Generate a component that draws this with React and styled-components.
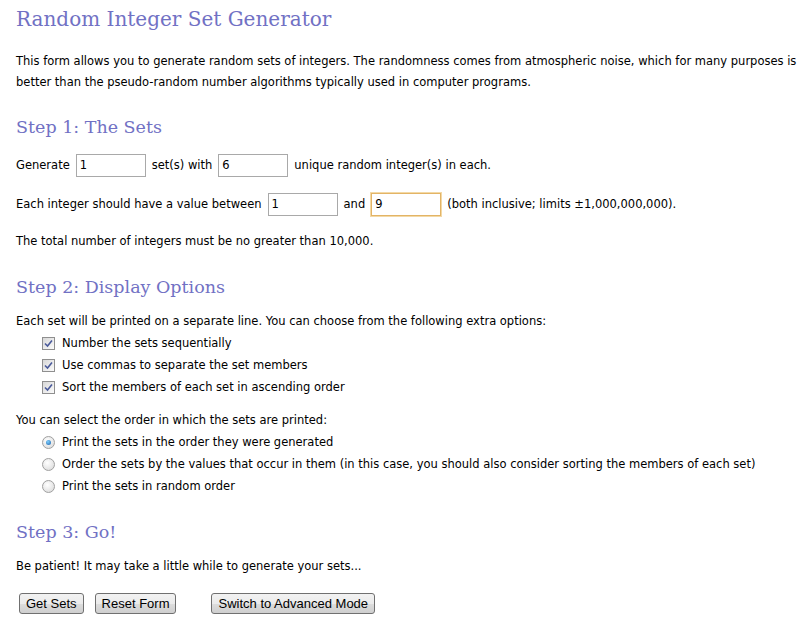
import styled, { createGlobalStyle } from "styled-components";

const Global = createGlobalStyle`
  body {
    margin: 0;
    background: #fff;
    color: #000;
    font-family: "DejaVu Sans", Verdana, sans-serif;
    font-size: 11.5px;
  }
`;

const Page = styled.div`
  width: 805px;
  padding: 0 8px 0 16px;
  box-sizing: border-box;
`;

const Title = styled.h1`
  margin: 0;
  padding-top: 6px;
  height: 26px;
  font-family: "DejaVu Serif", Georgia, serif;
  font-weight: normal;
  font-size: 20px;
  line-height: 26px;
  color: #7171c4;
`;

const StepTitle = styled.h2`
  margin: ${(p) => p.$top || 0}px 0 0;
  font-family: "DejaVu Serif", Georgia, serif;
  font-weight: normal;
  font-size: 17.5px;
  line-height: 24px;
  color: #7171c4;
`;

const Para = styled.p`
  margin: ${(p) => p.$top || 0}px 0 0;
  line-height: 21px;
`;

const Row = styled.div`
  display: flex;
  align-items: center;
  gap: 6px;
  margin-top: ${(p) => p.$top || 0}px;
  height: 24px;
  white-space: nowrap;
`;

const NumInput = styled.input`
  width: 70px;
  height: 23px;
  box-sizing: border-box;
  margin: 0;
  padding: 1px 3px;
  border: 1px solid ${(p) => (p.$focus ? "#e3b466" : "#a9a9a9")};
  box-shadow: ${(p) => (p.$focus ? "0 0 0 1px #f3d9a6" : "none")};
  font-family: "DejaVu Sans", Verdana, sans-serif;
  font-size: 11.5px;
  color: #000;
  outline: none;
`;

const OptionList = styled.div`
  display: flex;
  flex-direction: column;
  padding-left: 26px;
`;

const Option = styled.label`
  display: flex;
  align-items: center;
  gap: 7px;
  height: 22px;
`;

const Box = styled.span`
  width: 13px;
  height: 13px;
  box-sizing: border-box;
  border: 1px solid #8f8f8f;
  background: linear-gradient(135deg, #d8d8d8, #fbfbfb);
  display: flex;
  align-items: center;
  justify-content: center;
`;

const Radio = styled.span`
  width: 13px;
  height: 13px;
  box-sizing: border-box;
  border-radius: 50%;
  border: 1px solid #a0a0a0;
  background: radial-gradient(circle at 40% 35%, #ffffff, #d6d6d6);
  display: flex;
  align-items: center;
  justify-content: center;
`;

const Dot = styled.span`
  width: 5px;
  height: 5px;
  border-radius: 50%;
  background: radial-gradient(circle at 40% 35%, #7fd0ff, #1a5fa8);
`;

const ButtonRow = styled.div`
  display: flex;
  gap: 11px;
  margin-top: 16px;
  padding-left: 3px;
`;

const Button = styled.button`
  height: 21px;
  padding: 0 6px;
  font-family: "Liberation Sans", Arial, sans-serif;
  font-size: 13px;
  color: #000;
  border: 1px solid #707070;
  border-radius: 3px;
  background: linear-gradient(#f2f2f2 0%, #ebebeb 50%, #dddddd 51%, #cfcfcf 100%);
  margin-left: ${(p) => p.$gap || 0}px;
`;

const Check = () => (
  <Box>
    <svg width="9" height="9" viewBox="0 0 9 9">
      <path d="M1 4.5 L3.5 7 L8 1.5" fill="none" stroke="#4a5a9a" strokeWidth="1.6" />
    </svg>
  </Box>
);

const App = () => (
  <Page>
    <Global />
    <Title>Random Integer Set Generator</Title>
    <Para $top={19}>
      This form allows you to generate random sets of integers. The randomness comes from
      atmospheric noise, which for many purposes is better than the pseudo-random number
      algorithms typically used in computer programs.
    </Para>

    <StepTitle $top={22}>Step 1: The Sets</StepTitle>
    <Row $top={14}>
      Generate <NumInput defaultValue="1" /> set(s) with <NumInput defaultValue="6" /> unique
      random integer(s) in each.
    </Row>
    <Row $top={15}>
      Each integer should have a value between <NumInput defaultValue="1" /> and{" "}
      <NumInput defaultValue="9" $focus /> (both inclusive; limits ±1,000,000,000).
    </Row>
    <Para $top={15}>The total number of integers must be no greater than 10,000.</Para>

    <StepTitle $top={23}>Step 2: Display Options</StepTitle>
    <Para $top={12}>
      Each set will be printed on a separate line. You can choose from the following extra
      options:
    </Para>
    <OptionList>
      <Option><Check />Number the sets sequentially</Option>
      <Option><Check />Use commas to separate the set members</Option>
      <Option><Check />Sort the members of each set in ascending order</Option>
    </OptionList>
    <Para $top={12}>You can select the order in which the sets are printed:</Para>
    <OptionList>
      <Option><Radio><Dot /></Radio>Print the sets in the order they were generated</Option>
      <Option>
        <Radio />
        Order the sets by the values that occur in them (in this case, you should also
        consider sorting the members of each set)
      </Option>
      <Option><Radio />Print the sets in random order</Option>
    </OptionList>

    <StepTitle $top={23}>Step 3: Go!</StepTitle>
    <Para $top={12}>Be patient! It may take a little while to generate your sets...</Para>
    <ButtonRow>
      <Button>Get Sets</Button>
      <Button>Reset Form</Button>
      <Button $gap={24}>Switch to Advanced Mode</Button>
    </ButtonRow>
  </Page>
);

export default App;
